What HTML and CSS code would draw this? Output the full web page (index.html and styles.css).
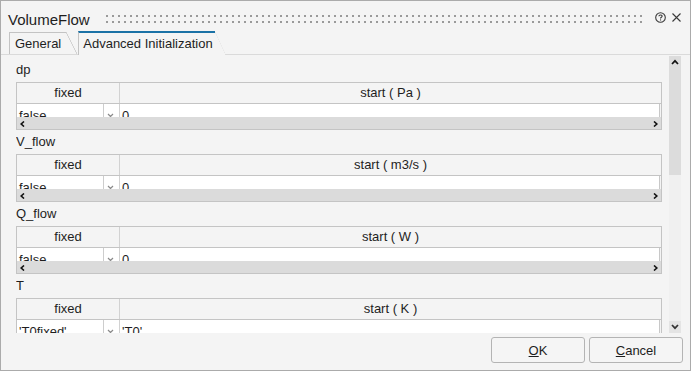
FILE: index.html
```html
<html>
<head>
<title>VolumeFlow</title>
<link rel="stylesheet" href="styles.css">
</head>
<body>

<div class="dialog">

  <!-- title bar -->
  <div class="titlebar">
    <span class="title">VolumeFlow</span>
    <svg class="grip" height="8">
      <defs>
        <pattern id="dots" width="6" height="6" patternUnits="userSpaceOnUse">
          <rect x="0" y="0" width="2" height="2" fill="#9a9a9a"/>
        </pattern>
      </defs>
      <rect x="0" y="0" width="100%" height="8" fill="url(#dots)"/>
    </svg>
    <svg class="help" width="11" height="11" viewBox="0 0 11 11">
      <circle cx="5.5" cy="5.5" r="4.8" fill="none" stroke="#3a3a3a" stroke-width="1.1"/>
      <path d="M3.9 4.3 C3.9 2.6 7.1 2.6 7.1 4.2 C7.1 5.2 5.5 5.3 5.5 6.5" fill="none" stroke="#3a3a3a" stroke-width="1.1"/>
      <rect x="5" y="7.4" width="1.1" height="1.1" fill="#3a3a3a"/>
    </svg>
    <svg class="close" width="9" height="9" viewBox="0 0 9 9">
      <path d="M0.5 0.5 L8.5 8.5 M8.5 0.5 L0.5 8.5" stroke="#3a3a3a" stroke-width="1.1"/>
    </svg>
  </div>

  <!-- tabs -->
  <div class="tabs">
    <div class="tab">General</div>
    <div class="tab active">Advanced Initialization</div>
  </div>

  <!-- parameters -->
  <div class="panel">
    <div class="params">

      <div class="param">
        <div class="param-name">dp</div>
        <div class="grid">
          <div class="grid-head"><div class="col-fixed">fixed</div><div class="col-start">start ( Pa )</div></div>
          <div class="grid-body">
            <div class="cell-fixed"><span class="value">false</span><span class="drop"><svg width="7" height="8" viewBox="0 0 7 8"><path d="M1 1 L3.5 3.5 L6 1 M1 4.5 L3.5 7 L6 4.5" fill="none" stroke="#8a8a8a" stroke-width="1.2"/></svg></span></div>
            <div class="cell-start">0</div>
          </div>
          <div class="hscroll">
            <svg width="5" height="6" viewBox="0 0 5 6"><path d="M4 0.5 L1.2 3 L4 5.5" fill="none" stroke="#111" stroke-width="1.6"/></svg>
            <svg width="5" height="6" viewBox="0 0 5 6"><path d="M1 0.5 L3.8 3 L1 5.5" fill="none" stroke="#111" stroke-width="1.6"/></svg>
          </div>
        </div>
      </div>

      <div class="param">
        <div class="param-name">V_flow</div>
        <div class="grid">
          <div class="grid-head"><div class="col-fixed">fixed</div><div class="col-start">start ( m3/s )</div></div>
          <div class="grid-body">
            <div class="cell-fixed"><span class="value">false</span><span class="drop"><svg width="7" height="8" viewBox="0 0 7 8"><path d="M1 1 L3.5 3.5 L6 1 M1 4.5 L3.5 7 L6 4.5" fill="none" stroke="#8a8a8a" stroke-width="1.2"/></svg></span></div>
            <div class="cell-start">0</div>
          </div>
          <div class="hscroll">
            <svg width="5" height="6" viewBox="0 0 5 6"><path d="M4 0.5 L1.2 3 L4 5.5" fill="none" stroke="#111" stroke-width="1.6"/></svg>
            <svg width="5" height="6" viewBox="0 0 5 6"><path d="M1 0.5 L3.8 3 L1 5.5" fill="none" stroke="#111" stroke-width="1.6"/></svg>
          </div>
        </div>
      </div>

      <div class="param">
        <div class="param-name">Q_flow</div>
        <div class="grid">
          <div class="grid-head"><div class="col-fixed">fixed</div><div class="col-start">start ( W )</div></div>
          <div class="grid-body">
            <div class="cell-fixed"><span class="value">false</span><span class="drop"><svg width="7" height="8" viewBox="0 0 7 8"><path d="M1 1 L3.5 3.5 L6 1 M1 4.5 L3.5 7 L6 4.5" fill="none" stroke="#8a8a8a" stroke-width="1.2"/></svg></span></div>
            <div class="cell-start">0</div>
          </div>
          <div class="hscroll">
            <svg width="5" height="6" viewBox="0 0 5 6"><path d="M4 0.5 L1.2 3 L4 5.5" fill="none" stroke="#111" stroke-width="1.6"/></svg>
            <svg width="5" height="6" viewBox="0 0 5 6"><path d="M1 0.5 L3.8 3 L1 5.5" fill="none" stroke="#111" stroke-width="1.6"/></svg>
          </div>
        </div>
      </div>

      <div class="param">
        <div class="param-name">T</div>
        <div class="grid">
          <div class="grid-head"><div class="col-fixed">fixed</div><div class="col-start">start ( K )</div></div>
          <div class="grid-body">
            <div class="cell-fixed"><span class="value">'T0fixed'</span><span class="drop"><svg width="7" height="8" viewBox="0 0 7 8"><path d="M1 1 L3.5 3.5 L6 1 M1 4.5 L3.5 7 L6 4.5" fill="none" stroke="#8a8a8a" stroke-width="1.2"/></svg></span></div>
            <div class="cell-start">'T0'</div>
          </div>
          <div class="hscroll">
            <svg width="5" height="6" viewBox="0 0 5 6"><path d="M4 0.5 L1.2 3 L4 5.5" fill="none" stroke="#111" stroke-width="1.6"/></svg>
            <svg width="5" height="6" viewBox="0 0 5 6"><path d="M1 0.5 L3.8 3 L1 5.5" fill="none" stroke="#111" stroke-width="1.6"/></svg>
          </div>
        </div>
      </div>

    </div>

    <div class="vscroll">
      <div class="vbtn"><svg width="8" height="6" viewBox="0 0 8 6"><path d="M1 5 L4 1.8 L7 5" fill="none" stroke="#111" stroke-width="1.7"/></svg></div>
      <div class="thumb"></div>
      <div class="track"></div>
      <div class="vbtn down"><svg width="8" height="6" viewBox="0 0 8 6"><path d="M1 1 L4 4.2 L7 1" fill="none" stroke="#333" stroke-width="1.7"/></svg></div>
    </div>
  </div>

  <!-- buttons -->
  <div class="footer">
    <button class="btn"><u>O</u>K</button>
    <button class="btn"><u>C</u>ancel</button>
  </div>

</div>

</body>
</html>
```

FILE: styles.css
```css
body {
  margin: 0;
  font-family: "Liberation Sans", Arial, sans-serif;
  color: #1e1e1e;
}

.dialog {
  width: 691px;
  height: 371px;
  box-sizing: border-box;
  border: 1px solid #ababab;
  background-color: #f4f4f4;
  display: flex;
  flex-direction: column;
}

/* Title bar */
.titlebar {
  height: 30px;
  box-sizing: border-box;
  padding: 6px 9px 0 7px;
  display: flex;
  align-items: center;
}

.title {
  font-size: 15px;
  line-height: 17px;
}

.grip {
  flex: 1;
  margin-left: 16px;
  margin-right: 10px;
}

.help {
  margin-top: -4px;
}

.close {
  margin-left: 6px;
  margin-top: -4px;
}

/* Tabs */
.tabs {
  height: 24px;
  box-sizing: border-box;
  padding-left: 8px;
  border-bottom: 1px solid #dadada;
  display: flex;
  align-items: flex-end;
}

.tab {
  position: relative;
  height: 22px;
  box-sizing: border-box;
  padding: 3px 5px 0 5px;
  border-top: 1px solid #c3c3c3;
  border-left: 1px solid #c3c3c3;
  font-size: 13px;
  line-height: 15px;
  margin-right: 12px;
}

/* slanted right edge of a tab */
.tab::after {
  content: '';
  position: absolute;
  top: -1px;
  bottom: 0;
  right: -11px;
  width: 11px;
  background: linear-gradient(to top right, transparent calc(50% - 0.7px), #c3c3c3 50%, transparent calc(50% + 0.7px));
}

.tab.active {
  height: 24px;
  margin-bottom: -1px;
  padding: 3px 2px 0 4px;
  border-top: 2px solid #1b72a6;
  background-color: #f4f4f4;
}

.tab.active::after {
  top: -2px;
  background: linear-gradient(to top right, transparent calc(50% - 0.7px), #c3c3c3 50%, transparent calc(50% + 0.7px)), #f4f4f4;
  clip-path: polygon(0 0, 100% 100%, 0 100%);
}

/* Parameter panel */
.panel {
  height: 278px;
  box-sizing: border-box;
  padding: 0 9px 0 15px;
  display: flex;
}

.params {
  flex: 1;
  overflow: hidden;
  padding-top: 3px;
}

.param-name {
  font-size: 13px;
  line-height: 24px;
}

.grid {
  height: 48px;
  box-sizing: border-box;
  border: 1px solid #c4c4c4;
  display: flex;
  flex-direction: column;
}

.grid-head {
  height: 21px;
  box-sizing: border-box;
  border-bottom: 1px solid #c4c4c4;
  display: flex;
  font-size: 13px;
  line-height: 20px;
  text-align: center;
}

.col-fixed {
  width: 103px;
  box-sizing: border-box;
  border-right: 1px solid #d2d2d2;
}

.col-start {
  flex: 1;
}

.grid-body {
  height: 13px;
  overflow: hidden;
  display: flex;
  font-size: 13px;
  line-height: 15px;
}

.cell-fixed {
  width: 103px;
  height: 22px;
  box-sizing: border-box;
  border-right: 1px solid #d2d2d2;
  background-color: #fff;
  display: flex;
}

.value {
  width: 87px;
  box-sizing: border-box;
  padding: 4px 0 0 2px;
  border-right: 1px solid #cdcdcd;
}

.drop {
  flex: 1;
  padding: 9px 0 0 3px;
}

.drop svg {
  display: block;
}

.cell-start {
  flex: 1;
  height: 22px;
  box-sizing: border-box;
  padding: 4px 0 0 2px;
  margin-right: 1px;
  background-color: #fff;
  border-right: 1px solid #c8c8c8;
}

.hscroll {
  height: 12px;
  background-color: #dbdbdb;
  display: flex;
  justify-content: space-between;
  align-items: center;
  padding: 1px 3px 0 3px;
  box-sizing: border-box;
}

/* Vertical scrollbar */
.vscroll {
  width: 12px;
  height: 277px;
  margin: 1px 0 0 7px;
  display: flex;
  flex-direction: column;
  background-color: #f0f0f0;
}

.vbtn {
  height: 12px;
  background-color: #dcdcdc;
  display: flex;
  align-items: center;
  justify-content: center;
}

.vbtn.down {
  background-color: #e4e4e4;
}

.thumb {
  height: 107px;
  background-color: #dcdcdc;
}

.track {
  flex: 1;
}

/* Footer buttons */
.footer {
  flex: 1;
  padding: 4px 7px 0 0;
  display: flex;
  justify-content: flex-end;
  align-items: flex-start;
  gap: 4px;
}

.btn {
  width: 94px;
  height: 26px;
  border: 1px solid #b4b4b4;
  border-radius: 3px;
  background-color: #f5f5f5;
  font-family: "Liberation Sans", Arial, sans-serif;
  font-size: 13px;
  color: #1e1e1e;
  padding: 0;
}
```
